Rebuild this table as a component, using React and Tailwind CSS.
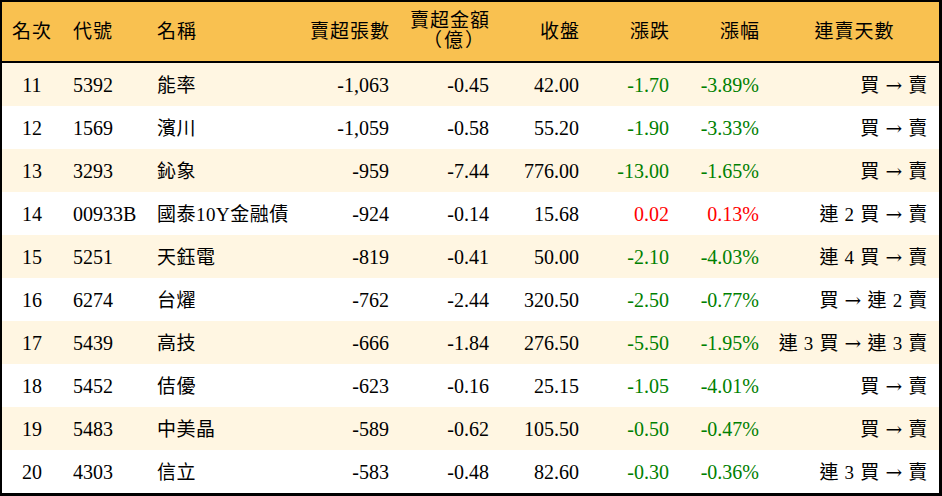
import React from "react";

const rows = [
  ["11", "5392", "能率", "-1,063", "-0.45", "42.00", "-1.70", "-3.89%", "買 → 賣"],
  ["12", "1569", "濱川", "-1,059", "-0.58", "55.20", "-1.90", "-3.33%", "買 → 賣"],
  ["13", "3293", "鈊象", "-959", "-7.44", "776.00", "-13.00", "-1.65%", "買 → 賣"],
  ["14", "00933B", "國泰10Y金融債", "-924", "-0.14", "15.68", "0.02", "0.13%", "連 2 買 → 賣"],
  ["15", "5251", "天鈺電", "-819", "-0.41", "50.00", "-2.10", "-4.03%", "連 4 買 → 賣"],
  ["16", "6274", "台燿", "-762", "-2.44", "320.50", "-2.50", "-0.77%", "買 → 連 2 賣"],
  ["17", "5439", "高技", "-666", "-1.84", "276.50", "-5.50", "-1.95%", "連 3 買 → 連 3 賣"],
  ["18", "5452", "佶優", "-623", "-0.16", "25.15", "-1.05", "-4.01%", "買 → 賣"],
  ["19", "5483", "中美晶", "-589", "-0.62", "105.50", "-0.50", "-0.47%", "買 → 賣"],
  ["20", "4303", "信立", "-583", "-0.48", "82.60", "-0.30", "-0.36%", "連 3 買 → 賣"],
];

const grid = "grid grid-cols-[60px_84px_154px_100px_100px_90px_90px_90px_1fr]";

function Days({ text }) {
  const parts = text.split("→");
  return (
    <>
      {parts[0]}
      <span className="text-[20px]" style={{ fontFamily: '"DejaVu Serif", serif' }}>→</span>
      {parts[1]}
    </>
  );
}

export default function App() {
  return (
    <div
      className="w-[942px] h-[496px] border-l-2 border-t-2 border-r-[3px] border-b-[3px] border-black text-[20px] text-black leading-none"
      style={{ fontFamily: '"Liberation Serif", "Noto Sans CJK TC", serif' }}
    >
      <div className={`${grid} h-[61px] bg-[#f9c150] border-b-2 border-black items-center text-[19px] tracking-[1px]`}>
        <div className="text-center">名次</div>
        <div className="pl-[11px]">代號</div>
        <div className="pl-[11px]">名稱</div>
        <div className="pr-[10px] text-right">賣超張數</div>
        <div className="pr-[10px] text-right leading-[20px] -mt-[1px]">
          賣超金額<br /><span className="tracking-[2px] pr-[4px]">（億）</span>
        </div>
        <div className="pr-[10px] text-right">收盤</div>
        <div className="pr-[10px] text-right">漲跌</div>
        <div className="pr-[10px] text-right">漲幅</div>
        <div className="text-center">連賣天數</div>
      </div>
      {rows.map((r, i) => {
        const up = !r[6].startsWith("-");
        const color = up ? "text-[#ff0000]" : "text-[#008000]";
        return (
          <div
            key={r[0]}
            className={`${grid} h-[43px] items-center ${i % 2 === 0 ? "bg-[#fff6e2]" : "bg-white"}`}
          >
            <div className="text-center">{r[0]}</div>
            <div className="pl-[11px]">{r[1]}</div>
            <div className="pl-[11px] whitespace-nowrap">
              <span className="text-[19px] tracking-[0.5px]">{r[2]}</span>
            </div>
            <div className="pr-[11px] text-right">{r[3]}</div>
            <div className="pr-[11px] text-right">{r[4]}</div>
            <div className="pr-[11px] text-right">{r[5]}</div>
            <div className={`pr-[11px] text-right ${color}`}>{r[6]}</div>
            <div className={`pr-[11px] text-right ${color}`}>{r[7]}</div>
            <div className="pr-[11px] text-right whitespace-pre text-[19px] tracking-[0.7px]">
              <Days text={r[8]} />
            </div>
          </div>
        );
      })}
    </div>
  );
}
